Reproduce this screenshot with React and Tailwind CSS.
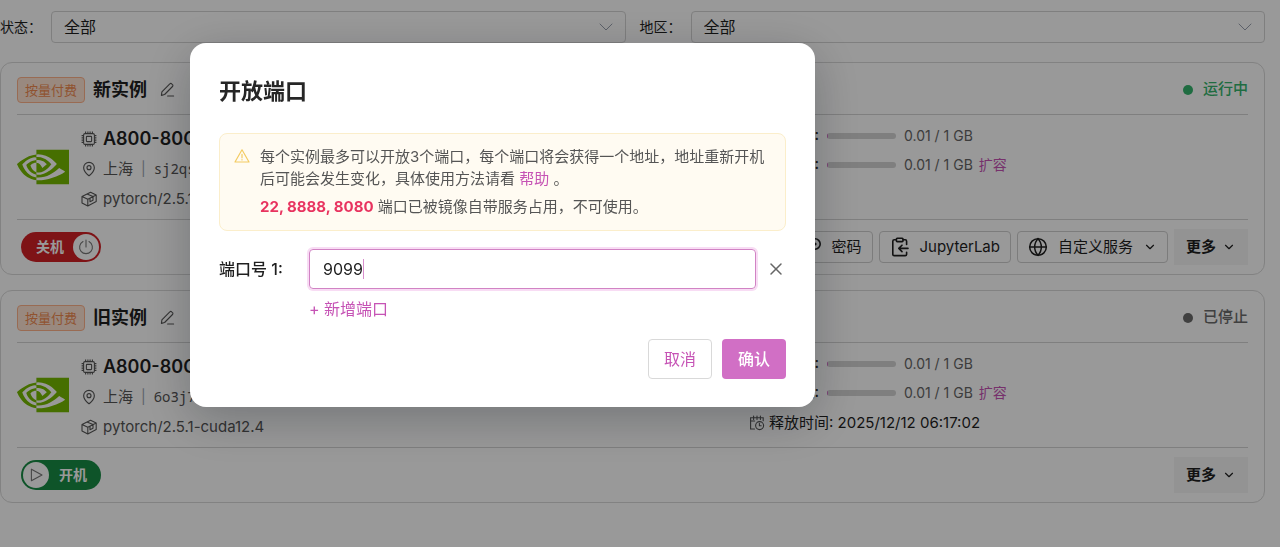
import { ChevronDown, Globe, MapPin, X } from "lucide-react";
import { SiNvidia } from "react-icons/si";

const instances = [
  { name: "新实例", id: "sj2qs8dk3f", running: true },
  { name: "旧实例", id: "6o3j7x2mqa", running: false },
];

const PencilIcon = () => (
  <svg viewBox="0 0 16 16" className="size-4" fill="none" stroke="currentColor" strokeWidth="1.1" strokeLinejoin="round" strokeLinecap="round">
    <path d="M2.4 13.4l.5-3.6 7.9-8a1.3 1.3 0 0 1 1.9 0l.8.8a1.3 1.3 0 0 1 0 1.9l-7.9 8-3.2.9zM8.6 14h6" />
  </svg>
);

const ChipIcon = () => (
  <svg viewBox="0 0 16 16" className="size-4" fill="none" stroke="currentColor" strokeWidth="1.1">
    <rect x="2.6" y="2.6" width="10.8" height="10.8" rx="1.4" />
    <rect x="5.4" y="5.4" width="5.2" height="5.2" rx=".6" />
    <path d="M4.6.6v2M6.9.6v2M9.1.6v2M11.4.6v2M4.6 13.4v2M6.9 13.4v2M9.1 13.4v2M11.4 13.4v2M.6 4.6h2M.6 6.9h2M.6 9.1h2M.6 11.4h2M13.4 4.6h2M13.4 6.9h2M13.4 9.1h2M13.4 11.4h2" />
  </svg>
);

const BoxIcon = () => (
  <svg viewBox="0 0 16 16" className="size-4" fill="none" stroke="currentColor" strokeLinejoin="round" strokeWidth="1.1">
    <path d="M1 5.4l8.6-4.2 5.6 2.7v6.6l-8.4 4.4L1 12zM1 5.4l5.8 2.8v6.7M6.8 8.2l8.4-4.3M9 7.2v3.6l3-1.5V5.6L6 2.9" />
  </svg>
);

const CalendarIcon = () => (
  <svg viewBox="0 0 16 16" className="size-4 text-[#555]" fill="none" stroke="currentColor" strokeWidth="1.1" strokeLinecap="round">
    <path d="M5.5 14H1.6V2.8h12.6v3M4.6 1v3.4M8 1v3.4M11.4 1v3.4M1.6 6h4" />
    <circle cx="10.6" cy="10.6" r="4" />
    <path d="M10.4 8.4v2.4h1.8" />
  </svg>
);

const ClipboardIcon = () => (
  <svg viewBox="0 0 20 20" className="size-5" fill="none" stroke="currentColor" strokeWidth="1.6" strokeLinejoin="round" strokeLinecap="round">
    <path d="M6.4 2.8H4.2a1.4 1.4 0 0 0-1.4 1.4v13a1.4 1.4 0 0 0 1.4 1.4h11a1.4 1.4 0 0 0 1.4-1.4v-2M13 2.8h2.2a1.4 1.4 0 0 1 1.4 1.4v3.2" />
    <rect x="6.4" y="1.2" width="6.6" height="3.4" rx=".8" />
    <path d="M18 11.4H9.2M12 8.2l-3.2 3.2 3.2 3.2" />
  </svg>
);

const KeyIcon = () => (
  <svg viewBox="0 0 20 20" className="size-5" fill="none" stroke="currentColor" strokeWidth="1.6" strokeLinejoin="round">
    <circle cx="13" cy="7" r="5.2" />
    <circle cx="13" cy="7" r=".8" />
    <path d="M9 11l-7 6.6h4v-2.4h2.4" />
  </svg>
);

const WarningIcon = () => (
  <svg viewBox="0 0 16 16" className="mt-0.5 size-4 shrink-0 text-[#f3cb62]" fill="none" stroke="currentColor" strokeWidth="1.2" strokeLinejoin="round" strokeLinecap="round">
    <path d="M8 1.8L15 14H1zM8 6.4v3.4M8 11.6v.4" />
  </svg>
);

const Filter = ({ id, label }) => (
  <div className="flex flex-1 items-center">
    <label htmlFor={id} className="w-[51px] shrink-0 text-sm">
      {label}：
    </label>
    <div className="relative flex-1">
      <select id={id} className="h-8 w-full appearance-none rounded border border-[#d4d4d4] bg-white px-3 text-base">
        <option>全部</option>
      </select>
      <ChevronDown strokeWidth={1} className="pointer-events-none absolute top-1 right-2 size-6 text-gray-400" />
    </div>
  </div>
);

const Usage = ({ label, expand }) => (
  <div className="flex h-[29px] items-center text-[15px]">
    <span className="w-[70px] text-right font-medium">{label}:</span>
    <div className="ml-2 h-1.5 w-[69px] overflow-hidden rounded-full bg-[#d4d4d4]">
      <div className="h-full w-px bg-[#d16fc5]" />
    </div>
    <span className="ml-2 text-sm text-[#666]">0.01 / 1 GB</span>
    {expand && (
      <a href="#expand" className="ml-1.5 text-sm text-[#c653b5]">
        扩容
      </a>
    )}
  </div>
);

const PowerSwitch = ({ running }) =>
  running ? (
    <button className="flex h-[30px] w-20 items-center justify-between rounded-full bg-[#d22026] pr-0.5 pl-[15px] text-sm font-bold text-white">
      关机
      <span className="flex size-[26px] items-center justify-center rounded-full bg-white text-[#777]">
        <svg viewBox="0 0 16 16" className="size-4" fill="none" stroke="currentColor" strokeWidth="1.1" strokeLinecap="round">
          <path d="M8 1v7M5 2.6a6.4 6.4 0 1 0 6 0" />
        </svg>
      </span>
    </button>
  ) : (
    <button className="flex h-[30px] w-20 items-center gap-2.5 rounded-full bg-[#188c45] pl-0.5 text-sm font-bold text-white">
      <span className="flex size-[26px] items-center justify-center rounded-full bg-white text-[#777]">
        <svg viewBox="0 0 16 16" className="size-4" fill="none" stroke="currentColor" strokeWidth="1.1" strokeLinejoin="round">
          <path d="M3.4 2.2v11.6L14 8z" />
        </svg>
      </span>
      开机
    </button>
  );

const ToolButton = ({ icon, children }) => (
  <button className="flex h-8 items-center gap-2.5 rounded border border-[#cfcfcf] px-2.5 text-[15px]">
    {icon}
    {children}
  </button>
);

const InstanceCard = ({ name, id, running }) => (
  <article className="rounded-xl border border-[#d9d9d9] px-4">
    <header className="flex h-[52px] items-center border-b border-[#d4d4d4] pt-0.5">
      <span className="rounded border border-[#ffb38a] bg-[#ffe4d4] px-[7px] text-[13px] leading-6 text-[#f08a50]">按量付费</span>
      <h2 className="ml-2 text-lg font-bold">{name}</h2>
      <button aria-label="重命名" className="ml-3 text-[#555]">
        <PencilIcon />
      </button>
      <span className={running ? "ml-auto flex items-center gap-2.5 text-[#35b56d]" : "ml-auto flex items-center gap-2.5 text-[#6b6b6b]"}>
        <span className="size-2.5 rounded-full bg-current" />
        <span className="text-[15px] font-medium">{running ? "运行中" : "已停止"}</span>
      </span>
    </header>

    <div className="flex h-[105px] items-center border-b border-[#d4d4d4] text-[#555]">
      <SiNvidia className="size-[52px] shrink-0 text-[#76b900]" />
      <div className="mt-1 ml-3 flex w-[668px] flex-col">
        <div className="flex h-[30px] items-center gap-1.5">
          <ChipIcon />
          <span className="text-lg font-semibold text-[#1f1f1f]">A800-80GB</span>
        </div>
        <div className="flex h-[30px] items-center gap-1.5 text-[15px]">
          <MapPin strokeWidth={1.7} className="size-4" />
          上海
          <span className="mx-0.5 text-sm text-gray-400">|</span>
          <span className="font-['Noto_Sans_Mono','DejaVu_Sans_Mono',monospace] text-sm">{id}</span>
        </div>
        <div className="flex h-[30px] items-center gap-1.5 text-[15px]">
          <BoxIcon />
          pytorch/2.5.1-cuda12.4
        </div>
      </div>
      <div className="mb-0.5 flex h-[90px] flex-col text-[#1f1f1f]">
        <Usage label="系统盘" />
        <Usage label="数据盘" expand />
        {!running && (
          <div className="flex h-8 items-center gap-1 text-[15px]">
            <CalendarIcon />
            释放时间: 2025/12/12 06:17:02
          </div>
        )}
      </div>
    </div>

    <footer className="flex h-[54px] items-center gap-2 pl-1">
      <PowerSwitch running={running} />
      <div className="ml-auto flex items-center gap-1.5">
        {running && (
          <>
            <ToolButton icon={<KeyIcon />}>密码</ToolButton>
            <ToolButton icon={<ClipboardIcon />}>JupyterLab</ToolButton>
            <ToolButton icon={<Globe strokeWidth={1.8} className="size-5" />}>
              自定义服务
              <ChevronDown className="size-3.5" />
            </ToolButton>
          </>
        )}
        <button className="flex h-9 items-center gap-1.5 bg-[#f6f6f6] px-3 text-[15px] font-bold">
          更多
          <ChevronDown className="size-3.5" />
        </button>
      </div>
    </footer>
  </article>
);

const PortDialog = () => (
  <div role="dialog" aria-modal="true" aria-labelledby="dialog-title" className="w-[625px] max-w-full rounded-2xl bg-white px-[29px] py-7 shadow-[0_12px_48px_rgba(0,10,20,0.25)]">
    <h1 id="dialog-title" className="pt-0.5 text-[22px] leading-9 font-bold text-[#262626]">
      开放端口
    </h1>

    <div className="mt-6 flex gap-2.5 rounded-lg border border-[#fbeecb] bg-[#fffbf2] px-3.5 py-3 text-[15px] leading-[22px] text-[#555]">
      <WarningIcon />
      <div>
        <p>
          每个实例最多可以开放3个端口，每个端口将会获得一个地址，地址重新开机后可能会发生变化，具体使用方法请看{" "}
          <a href="#help" className="text-[#c653b5]">
            帮助
          </a>{" "}
          。
        </p>
        <p className="mt-1.5">
          <strong className="text-[#e8335f]">22, 8888, 8080</strong> 端口已被镜像自带服务占用，不可使用。
        </p>
      </div>
    </div>

    <form>
      <div className="mt-[18px] flex items-center">
        <label htmlFor="port-1" className="w-[90px] font-medium">
          端口号 1:
        </label>
        <div className="relative min-w-0 flex-1">
          <input
            id="port-1"
            defaultValue="9099"
            className="block h-10 w-full rounded border border-[#d183c4] px-[13px] text-base caret-transparent ring-2 ring-[#f8dcf4] outline-none"
          />
          {/* text cursor */}
          <span className="pointer-events-none absolute inset-y-2.5 left-[54px] w-px bg-[#d98fcd]" />
        </div>
        <button type="button" aria-label="删除端口" className="ml-2.5 text-[#666]">
          <X strokeWidth={1.8} className="size-5" />
        </button>
      </div>
      <button type="button" className="mt-2 ml-[90px] text-base text-[#c653b5]">
        + 新增端口
      </button>
      <div className="mt-[18px] flex justify-end gap-2.5">
        <button type="button" className="h-10 rounded border border-[#d9d9d9] px-[15px] text-[#c653b5]">
          取消
        </button>
        <button type="submit" className="h-10 rounded bg-[#d16fc5] px-4 font-medium text-white">
          确认
        </button>
      </div>
    </form>
  </div>
);

export default function App() {
  return (
    <div className="min-h-screen bg-white font-[Inter,'Noto_Sans_CJK_SC',sans-serif] text-[#1f1f1f]">
      <main className="pt-[11px] pr-[15px]">
        <div className="flex gap-3.5">
          <Filter id="status" label="状态" />
          <Filter id="region" label="地区" />
        </div>
        <div className="mt-[19px] flex flex-col gap-[15px]">
          {instances.map((item) => (
            <InstanceCard key={item.id} {...item} />
          ))}
        </div>
      </main>

      <div className="fixed inset-0 flex items-start justify-center bg-black/40 pt-[43px] pr-[275px]">
        <PortDialog />
      </div>
    </div>
  );
}
